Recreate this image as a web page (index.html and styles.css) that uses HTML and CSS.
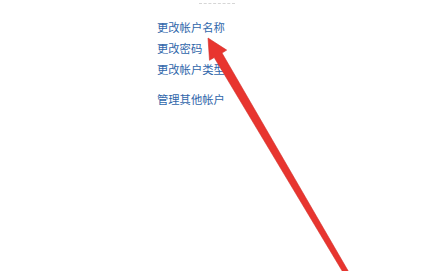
FILE: index.html
```html
<!DOCTYPE html>
<html lang="zh-CN">
<head>
<meta charset="utf-8">
<title>帐户</title>
<link rel="stylesheet" href="styles.css">
</head>
<body>
<div class="page">
  <div class="cut"></div>
  <ul class="links">
    <li><a href="#">更改帐户名称</a></li>
    <li><a href="#">更改密码</a></li>
    <li><a href="#">更改帐户类型</a></li>
    <li class="sep"><a href="#">管理其他帐户</a></li>
  </ul>
  <svg class="arrow" width="441" height="271" viewBox="0 0 441 271" aria-hidden="true">
    <polygon points="208,38 226.7,50.1 222,53 349.2,272.7 344.8,275.3 214.2,57.5 209.5,60.3" fill="#e8352f" stroke="#d22f2a" stroke-width="0.6" stroke-linejoin="round"/>
  </svg>
</div>
</body>
</html>
```

FILE: styles.css
```css
html, body {
  margin: 0;
  padding: 0;
  background: #ffffff;
}
.page {
  position: relative;
  width: 441px;
  height: 271px;
  overflow: hidden;
  font-family: "Noto Sans CJK SC", "Noto Sans", sans-serif;
}
.cut {
  margin: 3px 0 0 199px;
  width: 36px;
  height: 0;
  border-top: 1px dashed #d6d6d6;
}
.links {
  list-style: none;
  margin: 0;
  padding: 13px 0 0 157px;
  display: flex;
  flex-direction: column;
}
.links li {
  font-size: 11.3px;
  line-height: 21px;
  height: 21px;
}
.links li.sep {
  margin-top: 9px;
}
.links a {
  color: #2f66aa;
  text-decoration: none;
}
.arrow {
  position: absolute;
  left: 0;
  top: 0;
}
```
